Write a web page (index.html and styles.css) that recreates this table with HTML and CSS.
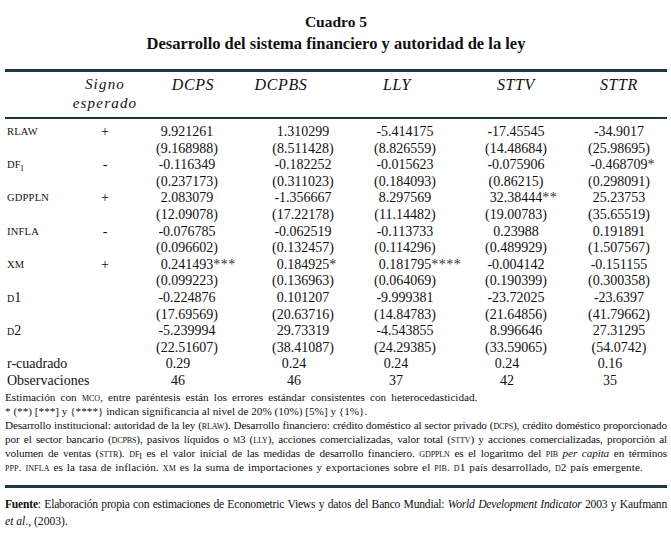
FILE: index.html
```html
<!DOCTYPE html>
<html lang="es">
<head>
<meta charset="utf-8">
<title>Cuadro 5</title>
<link rel="stylesheet" href="styles.css">
</head>
<body>
<div class="page">
  <div class="titles">
    <div class="t1">Cuadro 5</div>
    <div class="t2">Desarrollo del sistema financiero y autoridad de la ley</div>
  </div>
  <div class="rule-thick"></div>
  <div class="row head">
    <div class="c lab"></div>
    <div class="c sg"><span class="hd2">Signo<br>esperado</span></div>
    <div class="c"><span class="hd h-dcps">DCPS</span></div>
    <div class="c"><span class="hd h-dcpbs">DCPBS</span></div>
    <div class="c"><span class="hd h-lly">LLY</span></div>
    <div class="c"><span class="hd">STTV</span></div>
    <div class="c"><span class="hd">STTR</span></div>
  </div>
  <div class="rule-thin"></div>
  <div class="body">
    <div class="row"><div class="c lab"><span class="var">RLAW</span></div><div class="c sg">+</div><div class="c">9.921261</div><div class="c">1.310299</div><div class="c">-5.414175</div><div class="c">-17.45545</div><div class="c">-34.9017</div></div>
    <div class="row"><div class="c lab"></div><div class="c sg"></div><div class="c">(9.168988)</div><div class="c">(8.511428)</div><div class="c">(8.826559)</div><div class="c">(14.48684)</div><div class="c">(25.98695)</div></div>
    <div class="row"><div class="c lab"><span class="var">DF<sub>I</sub></span></div><div class="c sg">-</div><div class="c">-0.116349</div><div class="c">-0.182252</div><div class="c">-0.015623</div><div class="c">-0.075906</div><div class="c"><span>-0.468709</span><span class="st">*</span></div></div>
    <div class="row"><div class="c lab"></div><div class="c sg"></div><div class="c">(0.237173)</div><div class="c">(0.311023)</div><div class="c">(0.184093)</div><div class="c">(0.86215)</div><div class="c">(0.298091)</div></div>
    <div class="row"><div class="c lab"><span class="var">GDPPLN</span></div><div class="c sg">+</div><div class="c">2.083079</div><div class="c">-1.356667</div><div class="c">8.297569</div><div class="c"><span>32.38444</span><span class="st">**</span></div><div class="c">25.23753</div></div>
    <div class="row"><div class="c lab"></div><div class="c sg"></div><div class="c">(12.09078)</div><div class="c">(17.22178)</div><div class="c">(11.14482)</div><div class="c">(19.00783)</div><div class="c">(35.65519)</div></div>
    <div class="row"><div class="c lab"><span class="var">INFLA</span></div><div class="c sg">-</div><div class="c">-0.076785</div><div class="c">-0.062519</div><div class="c">-0.113733</div><div class="c">0.23988</div><div class="c">0.191891</div></div>
    <div class="row"><div class="c lab"></div><div class="c sg"></div><div class="c">(0.096602)</div><div class="c">(0.132457)</div><div class="c">(0.114296)</div><div class="c">(0.489929)</div><div class="c">(1.507567)</div></div>
    <div class="row"><div class="c lab"><span class="var">XM</span></div><div class="c sg">+</div><div class="c"><span>0.241493</span><span class="st">***</span></div><div class="c"><span>0.184925</span><span class="st">*</span></div><div class="c"><span>0.181795</span><span class="st">****</span></div><div class="c">-0.004142</div><div class="c">-0.151155</div></div>
    <div class="row"><div class="c lab"></div><div class="c sg"></div><div class="c">(0.099223)</div><div class="c">(0.136963)</div><div class="c">(0.064069)</div><div class="c">(0.190399)</div><div class="c">(0.300358)</div></div>
    <div class="row"><div class="c lab"><span class="dv">d1</span></div><div class="c sg"></div><div class="c">-0.224876</div><div class="c">0.101207</div><div class="c">-9.999381</div><div class="c">-23.72025</div><div class="c">-23.6397</div></div>
    <div class="row"><div class="c lab"></div><div class="c sg"></div><div class="c">(17.69569)</div><div class="c">(20.63716)</div><div class="c">(14.84783)</div><div class="c">(21.64856)</div><div class="c">(41.79662)</div></div>
    <div class="row"><div class="c lab"><span class="dv">d2</span></div><div class="c sg"></div><div class="c">-5.239994</div><div class="c">29.73319</div><div class="c">-4.543855</div><div class="c">8.996646</div><div class="c">27.31295</div></div>
    <div class="row"><div class="c lab"></div><div class="c sg"></div><div class="c">(22.51607)</div><div class="c">(38.41087)</div><div class="c">(24.29385)</div><div class="c">(33.59065)</div><div class="c">(54.0742)</div></div>
    <div class="row short"><div class="c lab"><span class="txt">r-cuadrado</span></div><div class="c sg"></div><div class="c"><span>0.29</span></div><div class="c"><span>0.24</span></div><div class="c"><span>0.24</span></div><div class="c"><span>0.24</span></div><div class="c"><span>0.16</span></div></div>
    <div class="row short"><div class="c lab"><span class="txt">Observaciones</span></div><div class="c sg"></div><div class="c"><span>46</span></div><div class="c"><span>46</span></div><div class="c"><span>37</span></div><div class="c"><span>42</span></div><div class="c"><span>35</span></div></div>
  </div>
  <div class="notes">
    <p class="n1">Estimación con <span class="sc">mco</span>, entre paréntesis están los errores estándar consistentes con heterocedasticidad.</p>
    <p class="n2">* (**) [***] y {****} indican significancia al nivel de 20% (10%) [5%] y {1%}.</p>
    <p class="n3">Desarrollo institucional: autoridad de la ley (<span class="sc">rlaw</span>). Desarrollo financiero: crédito doméstico al sector privado (<span class="sc">dcps</span>), crédito doméstico proporcionado por el sector bancario (<span class="sc">dcpbs</span>), pasivos líquidos o <span class="sc">m</span>3 (<span class="sc">lly</span>), acciones comercializadas, valor total (<span class="sc">sttv</span>) y acciones comercializadas, proporción al volumen de ventas (<span class="sc">sttr</span>). <span class="sc">df</span><sub>I</sub> es el valor inicial de las medidas de desarrollo financiero. <span class="sc">gdppln</span> es el logaritmo del <span class="sc">pib</span> <em>per capita</em> en términos</p>
    <p class="n4"><span class="sc">ppp</span>. <span class="sc">infla</span> es la tasa de inflación. <span class="sc">xm</span> es la suma de importaciones y exportaciones sobre el <span class="sc">pib</span>. <span class="sc">d</span>1 país desarrollado, <span class="sc">d</span>2 país emergente.</p>
  </div>
  <div class="rule-thick rule-bottom"></div>
  <div class="source">
    <p class="s1"><b>Fuente</b>: Elaboración propia con estimaciones de Econometric Views y datos del Banco Mundial: <em>World Development Indicator</em> 2003 y Kaufmann</p>
    <p class="s2"><em>et al</em>., (2003).</p>
  </div>
</div>
</body>
</html>
```
FILE: styles.css
```css
html, body {
  margin: 0;
  padding: 0;
  background: #ffffff;
}

body {
  font-family: "Liberation Serif", "Times New Roman", serif;
  color: #111111;
}

.page {
  width: 662px;
  margin: 0 4px 0 5px;
  padding-top: 11px;
}

.titles {
  text-align: center;
  font-weight: bold;
  line-height: 22px;
}

.t1 {
  font-size: 15.5px;
}

.t2 {
  font-size: 16.5px;
}

.rule-thick {
  height: 3px;
  background: #1d3947;
  margin-top: 14px;
}

.rule-thin {
  height: 2px;
  background: #1d3947;
}

.row {
  display: grid;
  grid-template-columns: 70px 60px 104px 128px 76px 146px 60px 18px;
  font-size: 14px;
  line-height: 16.6px;
  height: 16.6px;
}

.c {
  display: flex;
  justify-content: center;
  white-space: nowrap;
  min-width: 0;
}

.c.lab {
  justify-content: flex-start;
  padding-left: 2px;
}

.short .c span {
  margin-right: 18px;
}

.short .c.lab span {
  margin-right: 0;
}

.st {
  flex: 0 0 0;
  width: 0;
  min-width: 0;
  overflow: visible;
  letter-spacing: 0.5px;
  color: #333;
}

.head {
  height: auto;
  padding: 3px 0 4px;
  line-height: 19px;
}

.hd {
  font-style: italic;
  font-size: 16px;
  letter-spacing: 0.6px;
}

.h-dcps {
  margin-left: 12px;
}

.h-dcpbs {
  margin-right: 44px;
}

.h-lly {
  margin-right: 16px;
}

.hd2 {
  font-style: italic;
  font-size: 15px;
  letter-spacing: 1.2px;
  text-align: center;
  display: block;
}

.body {
  padding-top: 5px;
}

.var {
  font-size: 10.5px;
  letter-spacing: 0.2px;
}

.var sub {
  font-size: 8px;
  line-height: 0;
  vertical-align: -3px;
}

.dv {
  font-variant: small-caps;
}

.txt {
  font-size: 14px;
}

.notes {
  font-size: 11.2px;
  line-height: 14px;
  padding-top: 0;
}

.notes p {
  margin: 0;
}

.n1 {
  word-spacing: 2.4px;
}

.n3 {
  text-align: justify;
  text-align-last: justify;
  letter-spacing: -0.12px;
}

.n4 {
  letter-spacing: 0.1px;
  word-spacing: 1px;
}

.sc {
  font-variant: small-caps;
}

.notes sub {
  font-size: 8px;
  line-height: 0;
  vertical-align: -2px;
}

.rule-bottom {
  margin-top: 11px;
}

.source {
  margin-top: 8px;
  font-size: 11.6px;
  line-height: 17px;
}

.source p {
  margin: 0;
}

.s1 {
  white-space: nowrap;
  text-align: justify;
  text-align-last: justify;
  letter-spacing: -0.22px;
}
```
